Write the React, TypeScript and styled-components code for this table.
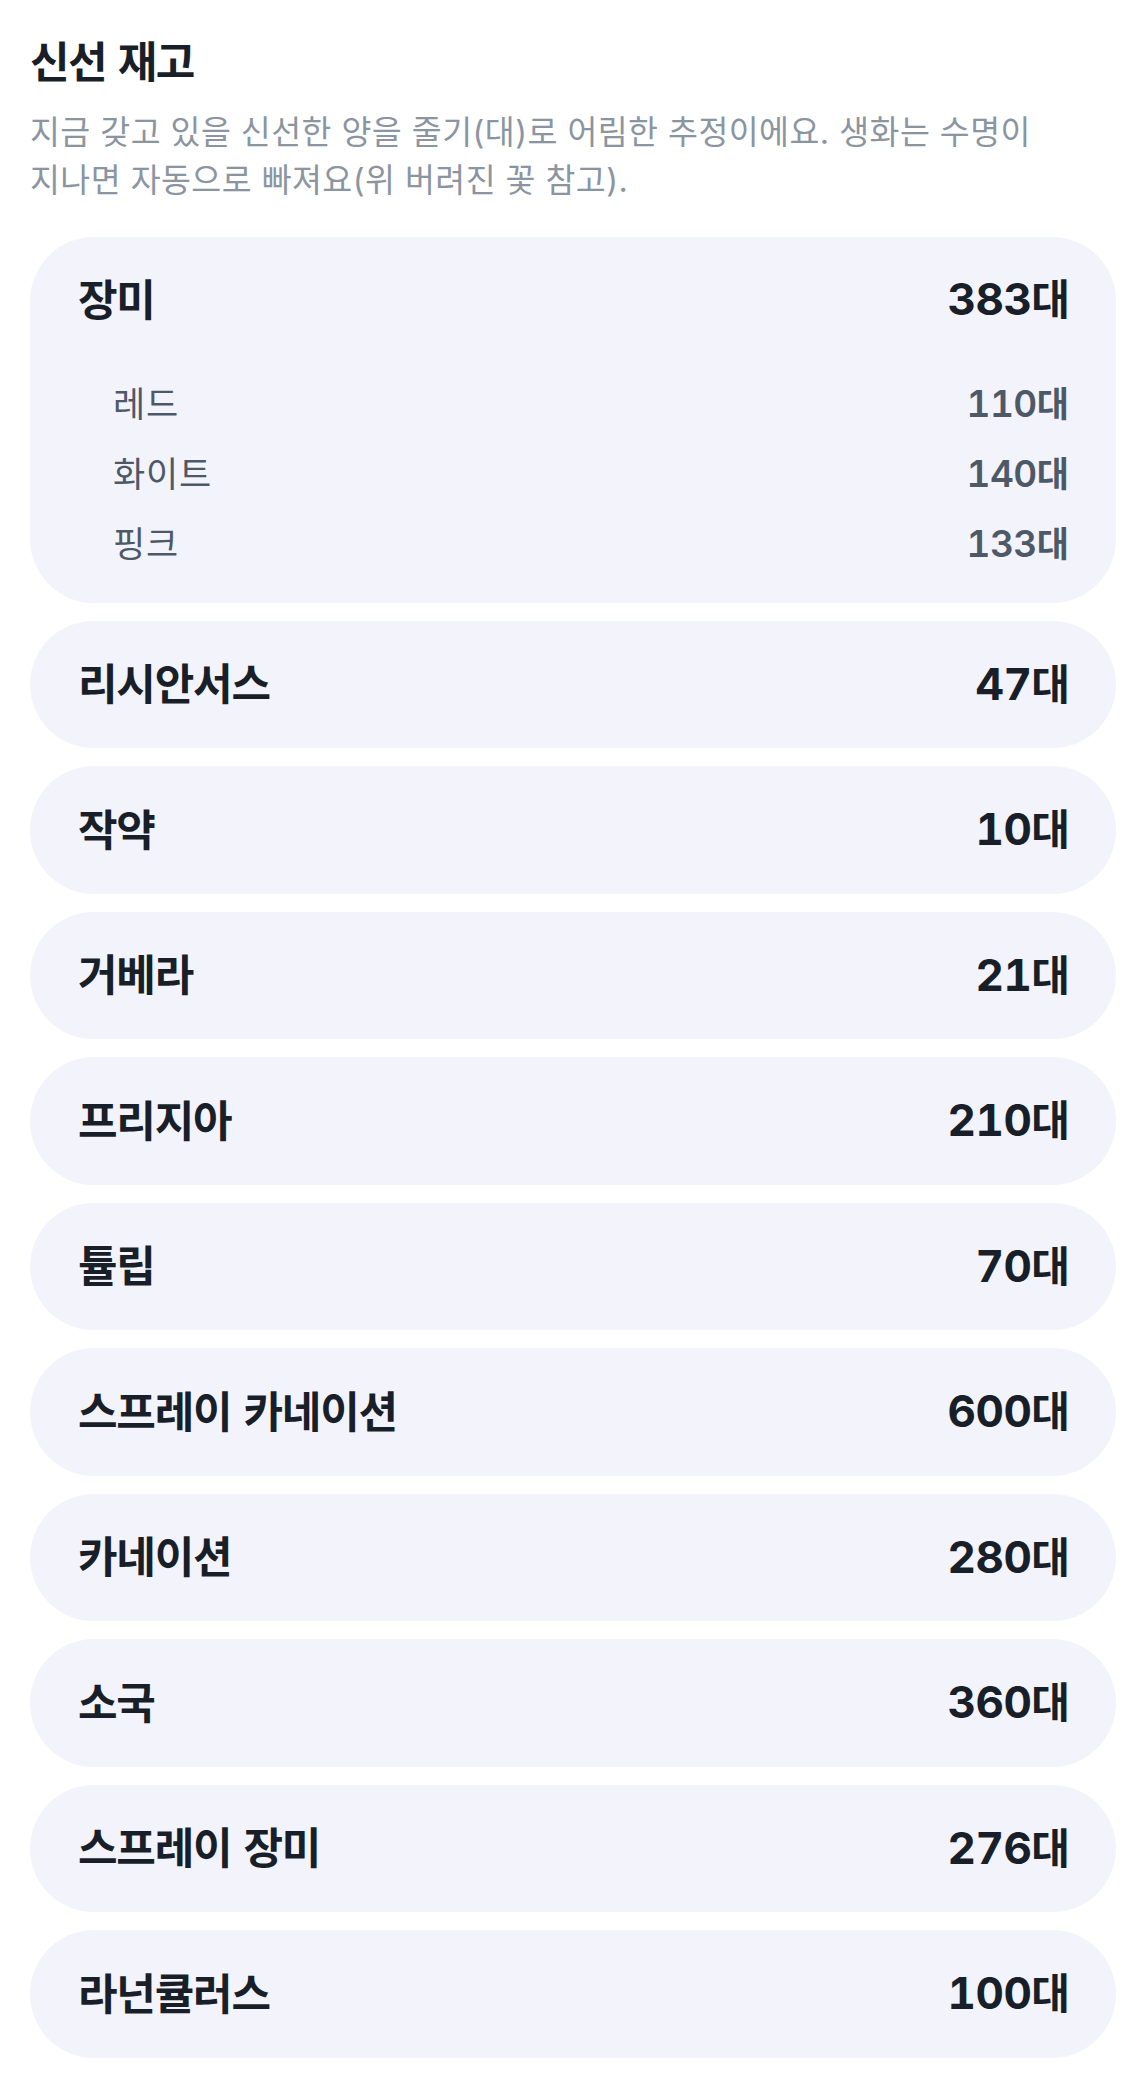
import React from "react";
import styled, { createGlobalStyle } from "styled-components";

const GlobalStyle = createGlobalStyle`
  html, body {
    margin: 0;
    padding: 0;
    background: #ffffff;
  }
  body {
    font-family: Inter, "Noto Sans CJK KR", sans-serif;
    -webkit-font-smoothing: antialiased;
  }
`;

const Page = styled.main`
  width: 1146px;
  box-sizing: border-box;
  padding: 34px 30px 31px;
  display: flex;
  flex-direction: column;
`;

const Title = styled.h2`
  margin: 0;
  font-size: 43px;
  line-height: 56px;
  font-weight: 700;
  letter-spacing: -1.5px;
  word-spacing: 3px;
  color: #191f28;
`;

const Subtitle = styled.p`
  margin: 19px 0 0;
  max-width: 1040px;
  font-size: 32.5px;
  line-height: 48px;
  font-weight: 400;
  letter-spacing: 0.45px;
  word-break: keep-all;
  color: #8b95a1;
`;

const List = styled.ul`
  list-style: none;
  margin: 32px 0 0;
  padding: 0;
  display: flex;
  flex-direction: column;
  gap: 18px;
`;

const Card = styled.li<{ $grouped?: boolean }>`
  background: #f3f3fc;
  border-radius: 64px;
  padding: ${(p) => (p.$grouped ? "32px 48px 26px" : "33px 48px 39px")};
`;

const Row = styled.div`
  display: flex;
  align-items: center;
  justify-content: space-between;
  height: 55.5px;
`;

const Label = styled.span`
  font-size: 43px;
  font-weight: 700;
  letter-spacing: -1.2px;
  word-spacing: 3px;
  color: #191f28;
  white-space: nowrap;
`;

const Count = styled.span<{ $sub?: boolean }>`
  font-size: ${(p) => (p.$sub ? "37px" : "44px")};
  font-weight: ${(p) => (p.$sub ? 600 : 700)};
  color: ${(p) => (p.$sub ? "#4e5968" : "#191f28")};
  font-variant-numeric: tabular-nums;
  letter-spacing: -0.5px;
  white-space: nowrap;
`;

const Unit = styled.span<{ $sub?: boolean }>`
  font-family: "Noto Sans CJK KR", sans-serif;
  font-size: ${(p) => (p.$sub ? "35px" : "42px")};
  letter-spacing: ${(p) => (p.$sub ? "-1px" : "-2px")};
`;

const SubList = styled.div`
  margin-top: 42px;
  padding-left: 35px;
  display: flex;
  flex-direction: column;
`;

const SubRow = styled.div`
  display: flex;
  align-items: center;
  justify-content: space-between;
  height: 70px;
`;

const SubLabel = styled.span`
  font-size: 35px;
  font-weight: 400;
  letter-spacing: 0.8px;
  color: #4e5968;
`;

type Item = { name: string; count: number; variants?: { name: string; count: number }[] };

const items: Item[] = [
  {
    name: "장미",
    count: 383,
    variants: [
      { name: "레드", count: 110 },
      { name: "화이트", count: 140 },
      { name: "핑크", count: 133 },
    ],
  },
  { name: "리시안서스", count: 47 },
  { name: "작약", count: 10 },
  { name: "거베라", count: 21 },
  { name: "프리지아", count: 210 },
  { name: "튤립", count: 70 },
  { name: "스프레이 카네이션", count: 600 },
  { name: "카네이션", count: 280 },
  { name: "소국", count: 360 },
  { name: "스프레이 장미", count: 276 },
  { name: "라넌큘러스", count: 100 },
];

const Amount: React.FC<{ value: number; sub?: boolean }> = ({ value, sub }) => (
  <Count $sub={sub}>
    {value}
    <Unit $sub={sub}>대</Unit>
  </Count>
);

export default function App() {
  return (
    <>
      <GlobalStyle />
      <Page>
        <Title>신선 재고</Title>
        <Subtitle>
          지금 갖고 있을 신선한 양을 줄기(대)로 어림한 추정이에요. 생화는 수명이 지나면 자동으로 빠져요(위 버려진 꽃 참고).
        </Subtitle>
        <List>
          {items.map((it) => (
            <Card key={it.name} $grouped={!!it.variants}>
              <Row>
                <Label>{it.name}</Label>
                <Amount value={it.count} />
              </Row>
              {it.variants && (
                <SubList>
                  {it.variants.map((v) => (
                    <SubRow key={v.name}>
                      <SubLabel>{v.name}</SubLabel>
                      <Amount value={v.count} sub />
                    </SubRow>
                  ))}
                </SubList>
              )}
            </Card>
          ))}
        </List>
      </Page>
    </>
  );
}
